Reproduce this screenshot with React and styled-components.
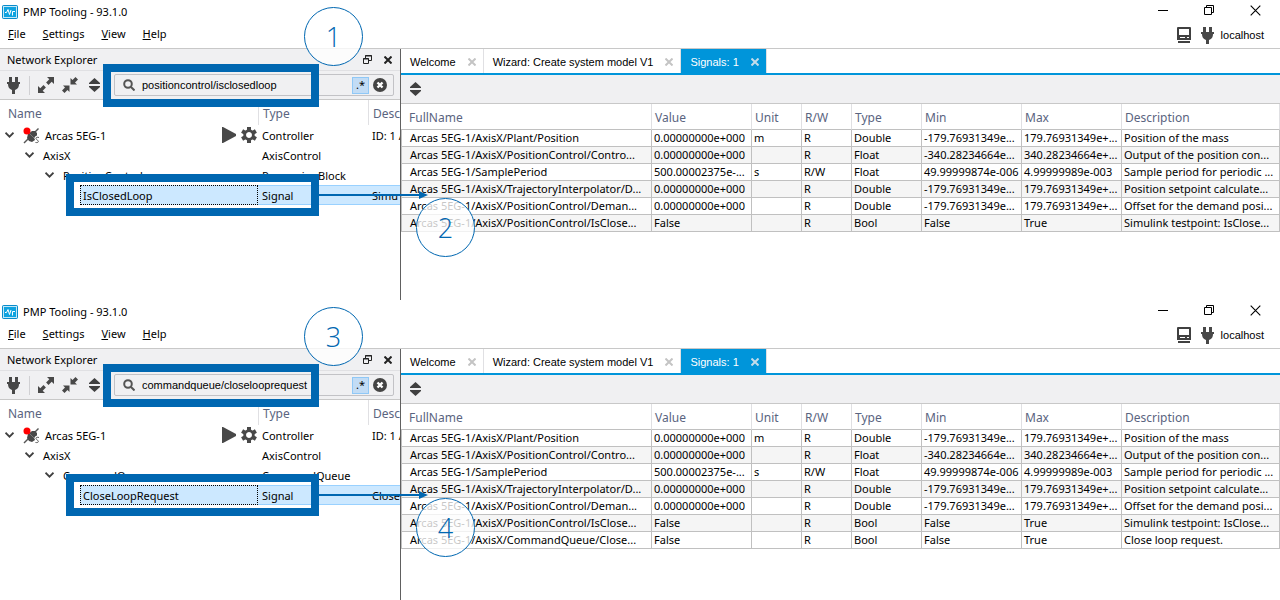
import React, { useState } from 'react';
import styled, { createGlobalStyle } from 'styled-components';

const GlobalStyle = createGlobalStyle`
  * {
    box-sizing: border-box;
  }

  body {
    margin: 0;
    background: #fff;
    color: #000;
    font-family: 'Noto Sans', 'Open Sans', sans-serif;
    font-size: 11px;
  }

  button, input {
    font: inherit;
    color: inherit;
    margin: 0;
    padding: 0;
    border: 0;
    background: none;
  }

  svg {
    display: block;
    flex: none;
  }
`;

const compactFont = "'Liberation Sans', Arial, sans-serif";

const Window = styled.section`
  position: relative;
  display: flex;
  flex-direction: column;
  min-height: 50vh;
  overflow: hidden;
  background: #fff;
`;

const TitleBar = styled.header`
  display: flex;
  align-items: center;
  height: 24px;
  padding: 0 2px;
`;

const Title = styled.h1`
  flex: 1;
  margin: 0 0 0 5px;
  padding-bottom: 2px;
  font-size: 11px;
  font-weight: 400;
`;

const CaptionButton = styled.button`
  display: flex;
  align-items: center;
  justify-content: center;
  align-self: flex-start;
  width: 46px;
  height: 20px;
`;

const MenuBar = styled.nav`
  display: flex;
  align-items: center;
  height: 24px;
  padding: 0 16px 6px 8px;
  gap: 17px;
`;

const MenuItem = styled.button`
  &::first-letter {
    text-decoration: underline;
  }
`;

const HostStatus = styled.div`
  display: flex;
  align-items: center;
  gap: 6px;
  margin-left: auto;
  padding-top: 4px;
  font-family: ${compactFont};
`;

const Body = styled.div`
  display: flex;
  flex: 1;
  border-top: 1px solid #c8c8c8;
`;

const Dock = styled.aside`
  flex: none;
  width: 401px;
  overflow: hidden;
  border-right: 1px solid #606060;
`;

const DockHeader = styled.div`
  display: flex;
  align-items: center;
  gap: 12px;
  height: 22px;
  padding: 0 8px 0 7px;
  background: #f0f0f2;
  border-bottom: 1px solid #e0e0e3;
`;

const DockTitle = styled.h2`
  flex: 1;
  margin: 0;
  font-size: 11px;
  font-weight: 400;
`;

const IconButton = styled.button`
  display: flex;
  align-items: center;
  justify-content: center;
`;

const Toolbar = styled.div`
  display: flex;
  align-items: center;
  height: 29px;
  padding: 0 6px;
  background: #f0f0f2;
  border-bottom: 1px solid #c8c8c8;
`;

const DockTools = styled.div`
  display: flex;
  align-items: center;
  gap: 8px;
  width: 108px;
`;

const Divider = styled.span`
  width: 1px;
  height: 19px;
  background: #d0d0d3;
`;

const SearchBox = styled.label`
  display: flex;
  flex: 1;
  align-items: center;
  height: 22px;
  padding: 0 6px 0 8px;
  border: 1px solid #c2c2c6;
  border-radius: 2px;
`;

const SearchInput = styled.input`
  flex: 1;
  min-width: 0;
  margin-left: 7px;
  outline: none;
  font-family: ${compactFont};
`;

const RegexToggle = styled.button`
  width: 17px;
  height: 17px;
  margin-right: 4px;
  border: 1px solid #90c8f6;
  background: #c2dcf5;
  line-height: 14px;
`;

const Tree = styled.table`
  width: 100%;
  table-layout: fixed;
  border-collapse: separate;
  border-spacing: 0;

  th, td {
    padding: 0 0 0 4px;
    overflow: hidden;
    white-space: nowrap;
    text-align: left;
    font-weight: 400;
  }

  th {
    height: 25px;
    padding-top: 2px;
    border-left: 1px solid #e0e0e3;
    color: #5a6480;
    font-size: 12px;
  }

  th:first-child {
    padding-left: 8px;
    border-left: 0;
  }

  td {
    height: 20px;
  }

  td:first-child {
    padding-left: 0;
  }
`;

const TreeRow = styled.tr`
  td + td {
    background: ${({ $selected }) => ($selected ? '#cce8ff' : 'none')};
    box-shadow: ${({ $selected }) =>
      $selected ? 'inset 0 1px #99d1ff, inset 0 -1px #99d1ff' : 'none'};
  }
`;

const TreeCell = styled.div`
  display: flex;
  align-items: center;
  gap: 5px;
  height: 20px;
  padding-right: 1px;
  padding-left: ${({ $level }) => 5 + $level * 20}px;
`;

const TreeLabel = styled.span`
  display: flex;
  flex: 1;
  align-items: center;
  gap: 5px;
  margin-left: 4px;
`;

const SelectedLabel = styled.span`
  display: block;
  height: 20px;
  margin-left: 80px;
  padding-left: 2px;
  border: 1px dotted #000;
  background: #cce8ff;
  line-height: 19px;
`;

const Main = styled.main`
  flex: 1;
  min-width: 0;
`;

const Tabs = styled.div`
  display: flex;
  height: 26px;
  border-bottom: 2px solid #0095da;
  font-family: ${compactFont};
`;

const Tab = styled.div`
  display: flex;
  align-items: center;
  gap: 12px;
  padding: 1px 7px 0 9px;
  border-right: 1px solid #e0e0e3;
  background: ${({ $active }) => ($active ? '#0095da' : '#fff')};
  color: ${({ $active }) => ($active ? '#fff' : '#000')};
`;

const TabButton = styled.button`
  white-space: nowrap;
`;

const SignalTable = styled.table`
  width: 100%;
  table-layout: fixed;
  border-collapse: separate;
  border-spacing: 0;

  th, td {
    overflow: hidden;
    white-space: nowrap;
    text-align: left;
    font-weight: 400;
  }

  th {
    height: 26px;
    padding: 2px 0 0 3px;
    border-right: 1px solid #e0e0e3;
    border-bottom: 1px solid #c0c0c0;
    color: #5a6480;
    font-size: 12px;
  }

  td {
    height: 17px;
    padding: 0 0 0 2px;
    border-right: 1px solid #c0c0c0;
    border-bottom: 1px solid #c0c0c0;
    line-height: 16px;
  }

  th:first-child {
    padding-left: 8px;
  }

  td:first-child {
    padding-left: 8px;
    border-left: 1px solid #c0c0c0;
  }

  tbody tr:nth-child(even) {
    background: #f5f5f5;
  }
`;

/* callouts drawn over the windows */
const Frame = styled.div`
  position: absolute;
  left: ${({ $left }) => $left}px;
  top: ${({ $top }) => $top}px;
  width: ${({ $left }) => 319 - $left}px;
  height: ${({ $height }) => $height}px;
  border: 8px solid #0067b1;
  pointer-events: none;
`;

const Arrow = styled.svg`
  position: absolute;
  left: 319px;
  top: 190px;
`;

const Step = styled.div`
  position: absolute;
  left: ${({ $left }) => $left}px;
  top: ${({ $top }) => $top}px;
  display: flex;
  align-items: center;
  justify-content: center;
  width: 59px;
  height: 59px;
  border: 1px solid #0067b1;
  border-radius: 50%;
  background: rgba(255, 255, 255, 0.78);
  color: #0067b1;
  font-family: 'Open Sans', 'Noto Sans', sans-serif;
  font-size: 27px;
  font-weight: 300;
  line-height: 36px;
`;

const LogoIcon = () => (
  <svg width="16" height="16" viewBox="0 0 16 16">
    <rect x="0.5" y="1.5" width="15" height="13" rx="1" fill="#0fa3e0" stroke="#0a8ccb" />
    <rect x="1.5" y="2.5" width="13" height="11" fill="none" stroke="#c4e8f8" />
    <path d="M3 8.500h1.500L6 5.500l1.500 5L9 6M10.500 11.500v-4H13" fill="none" stroke="#fff" />
  </svg>
);

const PlugIcon = () => (
  <svg width="15" height="17" viewBox="0 0 15 17" fill="#484848">
    <path d="M3 0h3v5H3zM9 0h3v5H9zM1 5h13v2h-1c0 3-1 5-4 6v4H6v-4c-3-1-4-3-4-6H1z" />
  </svg>
);

const ExpandIcon = () => (
  <svg width="16" height="16" viewBox="0 0 16 16" fill="#484848">
    <path d="M9 0h7v7l-2.300-2.300-3.200 3.200-2.400-2.400 3.200-3.200zM0 9l2.300 2.300 3.200-3.200 2.400 2.400-3.200 3.200L7 16H0z" />
  </svg>
);

const CollapseIcon = () => (
  <svg width="16" height="16" viewBox="0 0 16 16" fill="#484848">
    <path d="M8.500 1l2 2L13.500 0 16 2.500l-3 3 2 2H8.500zM1 8.500h6.500V15l-2-2-3 3L0 13.500l3-3z" />
  </svg>
);

const SortIcon = () => (
  <svg width="17" height="14" viewBox="0 0 17 14" fill="#404040">
    <path d="M8.500 0L14 5v1H3V5zM3 8h11v1l-5.500 5L3 9z" />
  </svg>
);

const SearchIcon = () => (
  <svg width="12" height="12" viewBox="0 0 12 12" fill="none" stroke="#555" strokeWidth="2">
    <circle cx="5" cy="5" r="3.800" />
    <path d="M8 8l3.500 3.500" />
  </svg>
);

const ClearIcon = () => (
  <svg width="14" height="14" viewBox="0 0 14 14">
    <circle cx="7" cy="7" r="7" fill="#444" />
    <path d="M4.500 4.500l5 5m0-5l-5 5" stroke="#fff" strokeWidth="2.400" />
  </svg>
);

const FloatIcon = () => (
  <svg width="9" height="9" viewBox="0 0 9 9" fill="none" stroke="#222">
    <path d="M2.500 3V.5h6v5H6M2 1h7M0 4h6" />
    <path d="M.5 3.500h5v5h-5z" />
  </svg>
);

const CrossIcon = ({ color = '#222', size = 8, weight = 2 }) => (
  <svg width={size} height={size} viewBox="0 0 8 8" stroke={color} strokeWidth={weight}>
    <path d="M.5.5l7 7m0-7l-7 7" />
  </svg>
);

const ChevronIcon = () => (
  <svg width="9" height="6" viewBox="0 0 9 6" fill="none" stroke="#404040" strokeWidth="1.800">
    <path d="M.5.7l4 4 4-4" />
  </svg>
);

const ControllerIcon = () => (
  <svg width="17" height="17" viewBox="0 0 17 17">
    <path d="M1 16L15.500 1.500" stroke="#555" strokeWidth="1.500" />
    <path d="M5 7l4-3h3l2 2v2l-2 5-3 2-3-1-2-3z" fill="#484848" />
    <path d="M6 6l6 6" stroke="#777" />
    <path
      d="M16 10.500c-3-1-4 1-2 2s2 3-1.500 2.500"
      fill="none"
      stroke="#fff"
      strokeWidth="3"
    />
    <path d="M16 10.500c-3-1-4 1-2 2.300s2 3.200-1.500 2.700" fill="none" stroke="#555" />
    <circle cx="4" cy="4" r="3.500" fill="#f00" />
  </svg>
);

const PlayIcon = () => (
  <svg width="14" height="16" viewBox="0 0 14 16" fill="#484848">
    <path d="M0 0h1l13 7v2L1 16H0z" />
  </svg>
);

const GearIcon = () => (
  <svg width="16" height="16" viewBox="0 0 16 16">
    <circle cx="8" cy="8" r="4.200" fill="none" stroke="#484848" strokeWidth="3" />
    <path
      d="M8 0v4M8 12v4M1.100 4l3.400 2M11.500 10l3.400 2M1.100 12l3.400-2M11.500 6l3.400-2"
      stroke="#484848"
      strokeWidth="4"
    />
    <circle cx="8" cy="8" r="2.700" fill="#fff" />
  </svg>
);

const MonitorIcon = () => (
  <svg width="18" height="16" viewBox="0 0 18 16">
    <path d="M1 1a1 1 0 0 1 1-1h12a1 1 0 0 1 1 1v12H1zM2 14h12v2H2z" fill="#404040" />
    <path d="M3 2h10v6H3zM4 10h5v1H4zM11 10h2v1h-2z" fill="#fff" />
  </svg>
);

const columns = [
  ['FullName', 251],
  ['Value', 100],
  ['Unit', 50],
  ['R/W', 50],
  ['Type', 70],
  ['Min', 100],
  ['Max', 100],
  ['Description'],
];

const signals = [
  ['Arcas 5EG-1/AxisX/Plant/Position', '0.00000000e+000', 'm', 'R', 'Double', '-179.76931349e...', '179.76931349e+...', 'Position of the mass'],
  ['Arcas 5EG-1/AxisX/PositionControl/Contro...', '0.00000000e+000', '', 'R', 'Float', '-340.28234664e...', '340.28234664e+...', 'Output of the position con...'],
  ['Arcas 5EG-1/SamplePeriod', '500.00002375e-...', 's', 'R/W', 'Float', '49.99999874e-006', '4.99999989e-003', 'Sample period for periodic ...'],
  ['Arcas 5EG-1/AxisX/TrajectoryInterpolator/D...', '0.00000000e+000', '', 'R', 'Double', '-179.76931349e...', '179.76931349e+...', 'Position setpoint calculate...'],
  ['Arcas 5EG-1/AxisX/PositionControl/Deman...', '0.00000000e+000', '', 'R', 'Double', '-179.76931349e...', '179.76931349e+...', 'Offset for the demand posi...'],
  ['Arcas 5EG-1/AxisX/PositionControl/IsClose...', 'False', '', 'R', 'Bool', 'False', 'True', 'Simulink testpoint: IsClose...'],
];

const closeLoopSignal = ['Arcas 5EG-1/AxisX/CommandQueue/Close...', 'False', '', 'R', 'Bool', 'False', 'True', 'Close loop request.'];

const NetworkExplorer = ({ query, block, blockType, signal, description }) => {
  const [search, setSearch] = useState(query);

  return (
    <Dock>
      <DockHeader>
        <DockTitle>Network Explorer</DockTitle>
        <IconButton aria-label="Float panel"><FloatIcon /></IconButton>
        <IconButton aria-label="Close panel"><CrossIcon /></IconButton>
      </DockHeader>
      <Toolbar>
        <DockTools>
          <IconButton aria-label="Connect"><PlugIcon /></IconButton>
          <Divider />
          <IconButton aria-label="Expand all"><ExpandIcon /></IconButton>
          <IconButton aria-label="Collapse all"><CollapseIcon /></IconButton>
          <IconButton aria-label="Sort"><SortIcon /></IconButton>
        </DockTools>
        <SearchBox>
          <SearchIcon />
          <SearchInput
            aria-label="Search signals"
            value={search}
            onChange={(e) => setSearch(e.target.value)}
          />
          <RegexToggle aria-label="Regular expression">.*</RegexToggle>
          <IconButton aria-label="Clear search" onClick={() => setSearch('')}>
            <ClearIcon />
          </IconButton>
        </SearchBox>
      </Toolbar>
      <Tree>
        <colgroup>
          <col width="258" />
          <col width="110" />
          <col />
        </colgroup>
        <thead>
          <tr>
            <th>Name</th>
            <th>Type</th>
            <th>Desc</th>
          </tr>
        </thead>
        <tbody>
          <TreeRow>
            <td>
              <TreeCell $level={0}>
                <ChevronIcon />
                <TreeLabel>
                  <ControllerIcon />
                  Arcas 5EG-1
                </TreeLabel>
                <PlayIcon />
                <GearIcon />
              </TreeCell>
            </td>
            <td>Controller</td>
            <td>ID: 1 A</td>
          </TreeRow>
          <TreeRow>
            <td>
              <TreeCell $level={1}>
                <ChevronIcon />
                <TreeLabel>AxisX</TreeLabel>
              </TreeCell>
            </td>
            <td>AxisControl</td>
            <td />
          </TreeRow>
          <TreeRow>
            <td>
              <TreeCell $level={2}>
                <ChevronIcon />
                <TreeLabel>{block}</TreeLabel>
              </TreeCell>
            </td>
            <td>{blockType}</td>
            <td />
          </TreeRow>
          <TreeRow $selected>
            <td><SelectedLabel>{signal}</SelectedLabel></td>
            <td>Signal</td>
            <td>{description}</td>
          </TreeRow>
        </tbody>
      </Tree>
    </Dock>
  );
};

const SignalsPanel = ({ rows }) => (
  <Main>
    <Tabs>
      <Tab>
        <TabButton>Welcome</TabButton>
        <IconButton aria-label="Close Welcome"><CrossIcon color="#c4c4c4" /></IconButton>
      </Tab>
      <Tab>
        <TabButton>Wizard: Create system model V1</TabButton>
        <IconButton aria-label="Close Wizard"><CrossIcon color="#c4c4c4" /></IconButton>
      </Tab>
      <Tab $active>
        <TabButton>Signals: 1</TabButton>
        <IconButton aria-label="Close Signals"><CrossIcon color="#c4dcea" /></IconButton>
      </Tab>
    </Tabs>
    <Toolbar>
      <IconButton aria-label="Sort signals"><SortIcon /></IconButton>
    </Toolbar>
    <SignalTable>
      <colgroup>
        {columns.map(([name, width]) => <col key={name} width={width} />)}
      </colgroup>
      <thead>
        <tr>
          {columns.map(([name]) => <th key={name}>{name}</th>)}
        </tr>
      </thead>
      <tbody>
        {rows.map((row) => (
          <tr key={row[0]}>
            {row.map((cell, i) => <td key={columns[i][0]}>{cell}</td>)}
          </tr>
        ))}
      </tbody>
    </SignalTable>
  </Main>
);

const ToolWindow = ({ explorer, rows, steps }) => (
  <Window>
    <TitleBar>
      <LogoIcon />
      <Title>PMP Tooling - 93.1.0</Title>
      <CaptionButton aria-label="Minimize">
        <svg width="10" height="10" viewBox="0 0 10 10" stroke="#000"><path d="M0 5.500h10" /></svg>
      </CaptionButton>
      <CaptionButton aria-label="Restore">
        <svg width="10" height="10" viewBox="0 0 10 10" fill="none" stroke="#000">
          <path d="M.5 2.500h7v7h-7zM2.500 2.500v-2h7v7h-2" />
        </svg>
      </CaptionButton>
      <CaptionButton aria-label="Close">
        <CrossIcon color="#000" size={11} weight={0.8} />
      </CaptionButton>
    </TitleBar>
    <MenuBar>
      <MenuItem>File</MenuItem>
      <MenuItem>Settings</MenuItem>
      <MenuItem>View</MenuItem>
      <MenuItem>Help</MenuItem>
      <HostStatus>
        <MonitorIcon />
        <PlugIcon />
        localhost
      </HostStatus>
    </MenuBar>
    <Body>
      <NetworkExplorer {...explorer} />
      <SignalsPanel rows={rows} />
    </Body>
    <Frame $left={103} $top={64} $height={43} />
    <Frame $left={66} $top={174} $height={42} />
    <Arrow width="110" height="10" viewBox="0 0 110 10">
      <path d="M0 5h102" stroke="#0067b1" strokeWidth="2" />
      <path d="M100 1l9 4-9 4z" fill="#0067b1" />
    </Arrow>
    <Step $left={304} $top={7}>{steps[0]}</Step>
    <Step $left={416} $top={198}>{steps[1]}</Step>
  </Window>
);

const App = () => (
  <>
    <GlobalStyle />
    <ToolWindow
      explorer={{
        query: 'positioncontrol/isclosedloop',
        block: 'PositionControl',
        blockType: 'ProcessingBlock',
        signal: 'IsClosedLoop',
        description: 'Simu',
      }}
      rows={signals}
      steps={[1, 2]}
    />
    <ToolWindow
      explorer={{
        query: 'commandqueue/closelooprequest',
        block: 'CommandQueue',
        blockType: 'CommandQueue',
        signal: 'CloseLoopRequest',
        description: 'Close',
      }}
      rows={[...signals, closeLoopSignal]}
      steps={[3, 4]}
    />
  </>
);

export default App;
